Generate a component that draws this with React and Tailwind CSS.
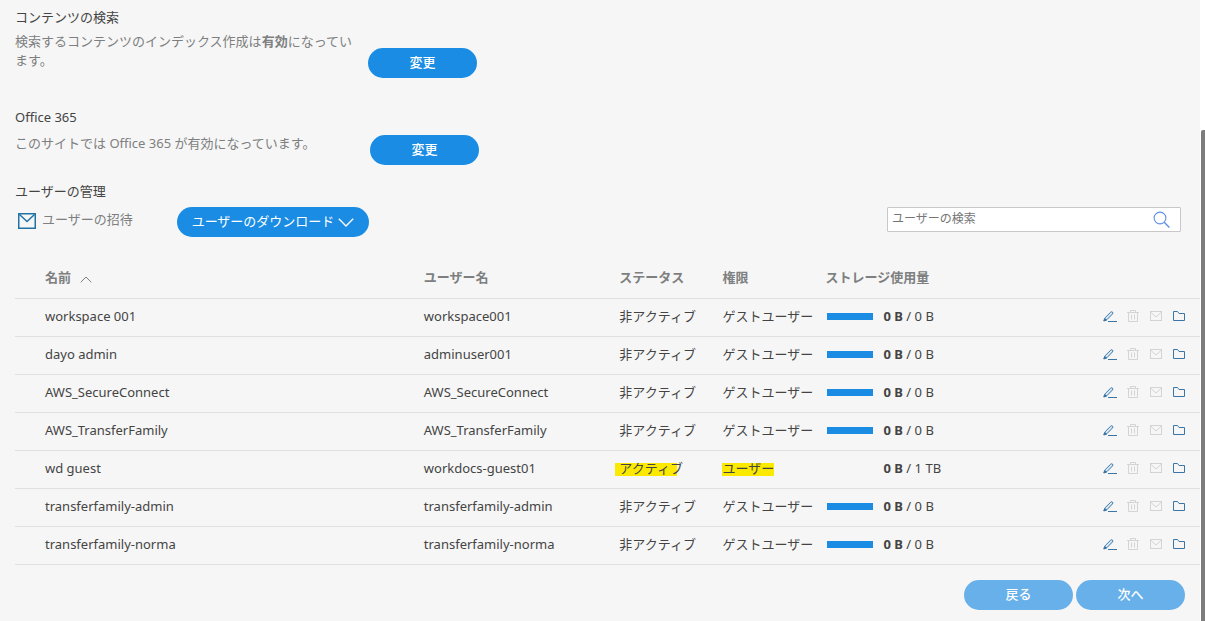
const FONT = "font-['Noto_Sans','Noto_Sans_CJK_JP',sans-serif]";

const users = [
  { name: 'workspace 001', login: 'workspace001' },
  { name: 'dayo admin', login: 'adminuser001' },
  { name: 'AWS_SecureConnect', login: 'AWS_SecureConnect' },
  { name: 'AWS_TransferFamily', login: 'AWS_TransferFamily' },
  { name: 'wd guest', login: 'workdocs-guest01', active: true },
  { name: 'transferfamily-admin', login: 'transferfamily-admin' },
  { name: 'transferfamily-norma', login: 'transferfamily-norma' },
];

function EnvelopeIcon({ className }) {
  return (
    <svg className={className} viewBox="0 0 18 16" fill="none" stroke="currentColor" strokeWidth="1.5" aria-hidden="true">
      <rect x="0.75" y="0.75" width="16.5" height="14.5" />
      <path d="M1.5 1.5 L9 8.5 L16.5 1.5" />
    </svg>
  );
}

function SmallEnvelopeIcon() {
  return (
    <svg className="block h-[10px] w-3" viewBox="0 0 12 10" fill="none" stroke="currentColor" aria-hidden="true">
      <rect x="0.5" y="0.5" width="11" height="9" />
      <path d="M1 1.5 L6 6 L11 1.5" />
    </svg>
  );
}

function PencilIcon() {
  return (
    <svg className="block h-[11px] w-[14px] overflow-visible" viewBox="0 0 14 11" fill="none" stroke="currentColor" aria-hidden="true">
      <path d="M2.2 9.6 L3.4 6.4 L8.8 1.1 Q9.8 0.4 10.6 1.2 Q11.2 2.1 10.4 3 L5.2 8.4 Z" fill="#dbe8f1" />
      <path d="M1.8 10 L2.6 7.6 L4.4 9.2 Z" fill="currentColor" />
      <path d="M6 10.5 H15" />
    </svg>
  );
}

function TrashIcon() {
  return (
    <svg className="block h-3 w-3" viewBox="0 0 12 12" fill="none" stroke="currentColor" aria-hidden="true">
      <path d="M0 2.5 H12 M3.5 2.5 V0.5 H8.5 V2.5 M1.5 2.5 V11.5 H10.5 V2.5 M4.5 4.5 V9.5 M7.5 4.5 V9.5" />
    </svg>
  );
}

function FolderIcon() {
  return (
    <svg className="block h-[10px] w-3" viewBox="0 0 12 10" fill="none" stroke="currentColor" aria-hidden="true">
      <path d="M0.5 0.5 H4.5 L6 2.5 H11.5 V9.5 H0.5 Z" />
    </svg>
  );
}

function ChangeButton({ label, className }) {
  return (
    <button type="button" aria-label={label} className={`h-[30px] w-[109px] shrink-0 rounded-full bg-[#1a8ce3] pb-[2px] font-medium text-white ${className}`}>
      変更
    </button>
  );
}

function UserRow({ user }) {
  return (
    <tr className="h-[38px] border-b border-[#dfe1e1]">
      <td className="pb-[2px] pl-[30px]">{user.name}</td>
      <td className="pb-[2px]">{user.login}</td>
      <td className="pb-[2px]">
        {user.active ? (
          <span className="relative isolate">
            <span className="absolute top-1 right-[6px] -left-1 -z-10 h-[13px] bg-[#fbe900]" />
            アクティブ
          </span>
        ) : (
          '非アクティブ'
        )}
      </td>
      <td className="pb-[2px]">
        {user.active ? (
          <span className="relative isolate">
            <span className="absolute inset-x-0 top-1 -z-10 h-[13px] bg-[#fbe900]" />
            ユーザー
          </span>
        ) : (
          'ゲストユーザー'
        )}
      </td>
      <td className="pb-[2px]">
        <div className="flex items-center gap-[11px]">
          <span className={`ml-px h-[7px] w-[46px] ${user.active ? '' : 'bg-[#1a8ce3]'}`} />
          <span>
            <b className="font-bold">0 B</b> / {user.active ? '1 TB' : '0 B'}
          </span>
        </div>
      </td>
      <td className="pr-[15px] pb-[2px]">
        <div className="flex items-center justify-end gap-[11px] text-[#d3d5d5]">
          <button type="button" aria-label="編集" className="text-[#3a77a8]"><PencilIcon /></button>
          <button type="button" aria-label="削除" disabled><TrashIcon /></button>
          <button type="button" aria-label="招待を再送信" disabled><SmallEnvelopeIcon /></button>
          <button type="button" aria-label="フォルダー" className="text-[#3a77a8]"><FolderIcon /></button>
        </div>
      </td>
    </tr>
  );
}

export default function App() {
  return (
    <div className={`flex min-h-screen bg-[#f6f6f6] text-[13px] leading-5 text-[#444] ${FONT}`}>
      <main className="min-w-0 flex-1 pt-[7px] pb-[11px] pl-[15px]">
        <section>
          <h2>コンテンツの検索</h2>
          <div className="mt-[5px] flex items-start">
            <p className="w-[353px] pr-3 leading-[19px] text-[#7d7f80]">
              検索するコンテンツのインデックス作成は<b className="font-bold">有効</b>になっています。
            </p>
            <ChangeButton label="コンテンツの検索を変更" className="mt-4" />
          </div>
        </section>

        <section className="mt-[29px]">
          <h2>Office 365</h2>
          <div className="mt-[7px] flex items-start">
            <p className="w-[355px] leading-[19px] text-[#7d7f80]">このサイトでは Office 365 が有効になっています。</p>
            <ChangeButton label="Office 365 を変更" className="mt-px" />
          </div>
        </section>

        <section className="mt-4">
          <h2>ユーザーの管理</h2>
          <div className="mt-[6px] flex items-start pr-[19px]">
            <a href="#invite" className="flex w-[162px] items-start gap-[6px] pt-[2px] pl-[3px] text-[#7d7f80]">
              <EnvelopeIcon className="mt-1 h-4 w-[18px] text-[#2172a5]" />
              ユーザーの招待
            </a>
            <button type="button" className="flex h-[30px] w-48 items-center justify-center gap-1 rounded-full bg-[#1a8ce3] pb-[2px] text-white">
              ユーザーのダウンロード
              <svg className="mt-[2px] h-[9px] w-4" viewBox="0 0 16 9" fill="none" stroke="currentColor" strokeWidth="1.4" aria-hidden="true">
                <path d="M0.8 0.8 L8 8 L15.2 0.8" />
              </svg>
            </button>
            <label className="ml-auto flex h-[25px] w-[294px] items-center rounded-[1px] border border-[#c8c8c8] bg-white pr-[10px] pl-1">
              <input
                type="search"
                aria-label="ユーザーの検索"
                placeholder="ユーザーの検索"
                className="min-w-0 flex-1 bg-transparent pb-[2px] text-xs outline-none placeholder:text-[#757575]"
              />
              <svg className="h-[17px] w-[17px] text-[#5f8fe6]" viewBox="0 0 17 17" fill="none" stroke="currentColor" strokeWidth="1.1" aria-hidden="true">
                <circle cx="7" cy="7" r="5.9" />
                <path d="M11.2 11.2 L16.4 16.4" strokeWidth="1.4" />
              </svg>
            </label>
          </div>

          <table className="mt-[19px] w-full table-fixed border-collapse text-left">
            <colgroup>
              <col className="w-[34.5%]" />
              <col className="w-[16.5%]" />
              <col className="w-[8.7%]" />
              <col className="w-[8.7%]" />
              <col />
              <col className="w-[112px]" />
            </colgroup>
            <thead>
              <tr className="h-[42px] border-b border-[#dfe1e1] text-[#7d7f80]">
                <th className="pl-[30px] font-bold" aria-sort="ascending">
                  <button type="button" className="flex items-center gap-[9px] font-bold">
                    名前
                    <svg className="mt-[6px] h-[7px] w-3" viewBox="0 0 12 7" fill="none" stroke="currentColor" aria-hidden="true">
                      <path d="M0.7 6.3 L6 1 L11.3 6.3" />
                    </svg>
                  </button>
                </th>
                <th className="font-bold">ユーザー名</th>
                <th className="font-bold">ステータス</th>
                <th className="font-bold">権限</th>
                <th className="font-bold">ストレージ使用量</th>
                <td />
              </tr>
            </thead>
            <tbody>
              {users.map((user) => (
                <UserRow key={user.login} user={user} />
              ))}
            </tbody>
          </table>
        </section>

        <div className="mt-[15px] flex justify-end gap-[3px] pr-[15px]">
          <button type="button" className="h-[30px] w-[109px] rounded-full bg-[#68b0ea] pb-[2px] font-medium text-white">戻る</button>
          <button type="button" className="h-[30px] w-[109px] rounded-full bg-[#68b0ea] pb-[2px] font-medium text-white">次へ</button>
        </div>
      </main>

      <div className="flex w-[5px] flex-col bg-white pt-[130px] pl-px" aria-hidden="true">
        <div className="flex-1 rounded-tl-[2px] bg-[#7d7d7d]" />
      </div>
    </div>
  );
}
